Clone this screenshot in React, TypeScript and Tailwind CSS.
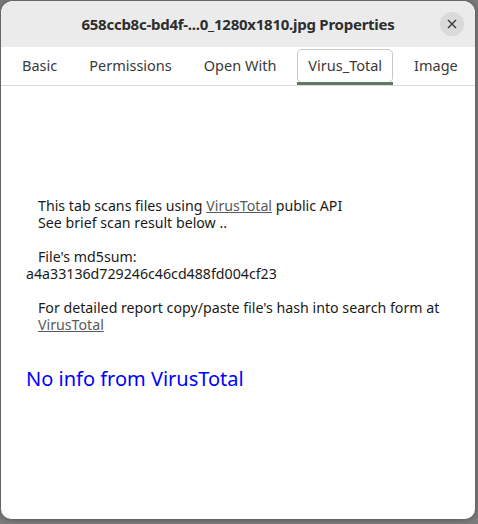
import React from "react";

const font = { fontFamily: '"Noto Sans", "Open Sans", sans-serif' };

export default function App() {
  const tabs = ["Basic", "Permissions", "Open With", "Virus_Total", "Image"];
  return (
    <div className="w-[478px] h-[524px] bg-[#7c7c7c] pt-[1px] pl-[1px]" style={font}>
      <div className="w-[474px] h-[518px] bg-white rounded-t-[12px] rounded-b-[10px] overflow-hidden flex flex-col shadow-[0_0_6px_rgba(0,0,0,0.4)]">
        <div className="h-[46px] bg-[#ebebeb] flex items-center relative shrink-0">
          <div className="flex-1 text-center text-[15px] font-bold text-[#2e2e2e] tracking-[-0.25px]">
            658ccb8c-bd4f-...0_1280x1810.jpg Properties
          </div>
          <div className="absolute right-[11px] top-[11px] w-[24px] h-[24px] rounded-full bg-[#dadada] flex items-center justify-center">
            <svg width="10" height="10" viewBox="0 0 10 10">
              <path d="M1 1L9 9M9 1L1 9" stroke="#3a3a3a" strokeWidth="1.4" />
            </svg>
          </div>
        </div>
        <div className="h-[39px] border-b border-[#d9d9d9] flex items-stretch shrink-0 pl-[5px] pt-[2px]">
          {tabs.map((t) => {
            const sel = t === "Virus_Total";
            return (
              <div key={t} className="px-[5px] flex items-start whitespace-nowrap">
                <div
                  className={
                    sel
                      ? "relative px-[10px] border border-[#c8c8c8] rounded-[5px] flex items-center text-[14.5px] text-[#3a3a3a] h-[34px]"
                      : "px-[11px] flex items-center text-[14.5px] text-[#3a3a3a] h-[34px]"
                  }
                >
                  {t}
                  {sel && (
                    <div className="absolute left-[-1px] right-[-1px] bottom-[-3px] h-[3px] bg-[#5f7a63]" />
                  )}
                </div>
              </div>
            );
          })}
        </div>
        <div className="flex-1 pt-[111px] text-[14.2px] leading-[17px] text-[#1a1a1a]">
          <div className="pl-[37px]">
            This tab scans files using <span className="underline text-[#595959]">VirusTotal</span> public API
          </div>
          <div className="pl-[37px]">See brief scan result below ..</div>
          <div className="h-[17px]" />
          <div className="pl-[37px]">File's md5sum:</div>
          <div className="pl-[25px]">a4a33136d729246c46cd488fd004cf23</div>
          <div className="h-[17px]" />
          <div className="pl-[37px]">For detailed report copy/paste file's hash into search form at</div>
          <div className="pl-[37px]">
            <span className="underline text-[#595959]">VirusTotal</span>
          </div>
          <div className="pl-[25px] mt-[34px] text-[20px] leading-[24px] text-[#0000ff]">No info from VirusTotal</div>
        </div>
      </div>
    </div>
  );
}
